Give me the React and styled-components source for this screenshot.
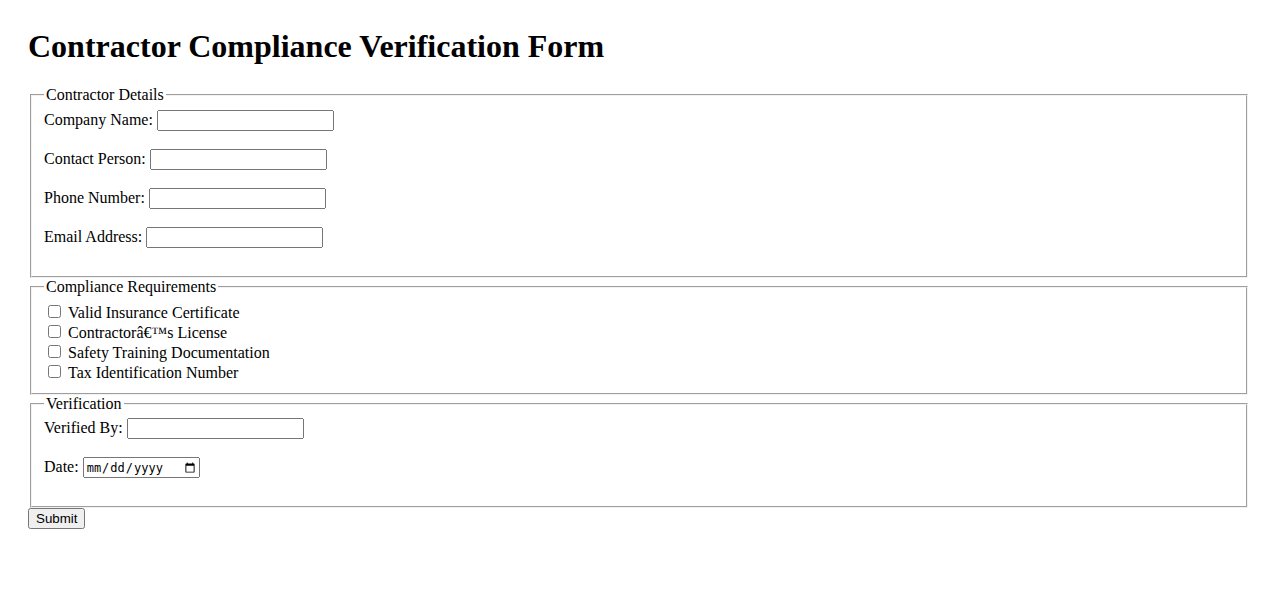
import React from 'react';
import styled, { createGlobalStyle } from 'styled-components';

const GlobalStyle = createGlobalStyle`
  body {
    margin: 0;
    padding: 28px;
    background: #ffffff;
    color: #000000;
    font-family: "Liberation Serif", "Times New Roman", serif;
    font-size: 16px;
  }
`;

const Title = styled.h1`
  font-size: 32px;
  font-weight: bold;
  margin: 0 0 21.44px;
`;

const Fieldset = styled.fieldset`
  margin: 0 2px;
  padding: 5.6px 12px 10px;
  border: 2px groove #f2f2f2;
`;

const Legend = styled.legend`
  padding: 0 2px;
`;

const Row = styled.div`
  margin-bottom: 18px;
`;

const TextInput = styled.input`
  width: 177px;
  height: 21px;
  box-sizing: border-box;
  font-family: "Liberation Sans", Arial, sans-serif;
  font-size: 13.33px;
`;

const DateInput = styled.input`
  width: 117px;
  height: 21px;
  box-sizing: border-box;
  font-family: "DejaVu Sans Mono", monospace;
  font-size: 12px;
`;

const CheckList = styled.div`
  padding-top: 1px;
`;

const CheckRow = styled.div`
  display: flex;
  align-items: center;
  height: 20px;
`;

const Checkbox = styled.input`
  width: 13px;
  height: 13px;
  margin: 0 7px 2px 4px;
`;

const SubmitButton = styled.button`
  font-family: "Liberation Sans", Arial, sans-serif;
  font-size: 13.33px;
  padding: 1px 6px;
  margin: 0;
`;

const fields = [
  { id: 'company', label: 'Company Name:' },
  { id: 'contact', label: 'Contact Person:' },
  { id: 'phone', label: 'Phone Number:' },
  { id: 'email', label: 'Email Address:' },
];

const requirements = [
  'Valid Insurance Certificate',
  'Contractor\u00e2\u20ac\u2122s License',
  'Safety Training Documentation',
  'Tax Identification Number',
];

export default function App() {
  return (
    <>
      <GlobalStyle />
      <Title>Contractor Compliance Verification Form</Title>
      <form onSubmit={(e) => e.preventDefault()}>
        <Fieldset>
          <Legend>Contractor Details</Legend>
          {fields.map((f) => (
            <Row key={f.id}>
              <label htmlFor={f.id}>{f.label}</label> <TextInput type="text" id={f.id} />
            </Row>
          ))}
        </Fieldset>

        <Fieldset>
          <Legend>Compliance Requirements</Legend>
          <CheckList>
            {requirements.map((r, i) => (
              <CheckRow key={i}>
                <Checkbox type="checkbox" id={`req${i}`} />
                <label htmlFor={`req${i}`}>{r}</label>
              </CheckRow>
            ))}
          </CheckList>
        </Fieldset>

        <Fieldset>
          <Legend>Verification</Legend>
          <Row>
            <label htmlFor="verifiedBy">Verified By:</label> <TextInput type="text" id="verifiedBy" />
          </Row>
          <Row>
            <label htmlFor="date">Date:</label> <DateInput type="date" id="date" />
          </Row>
        </Fieldset>

        <SubmitButton type="submit">Submit</SubmitButton>
      </form>
    </>
  );
}
